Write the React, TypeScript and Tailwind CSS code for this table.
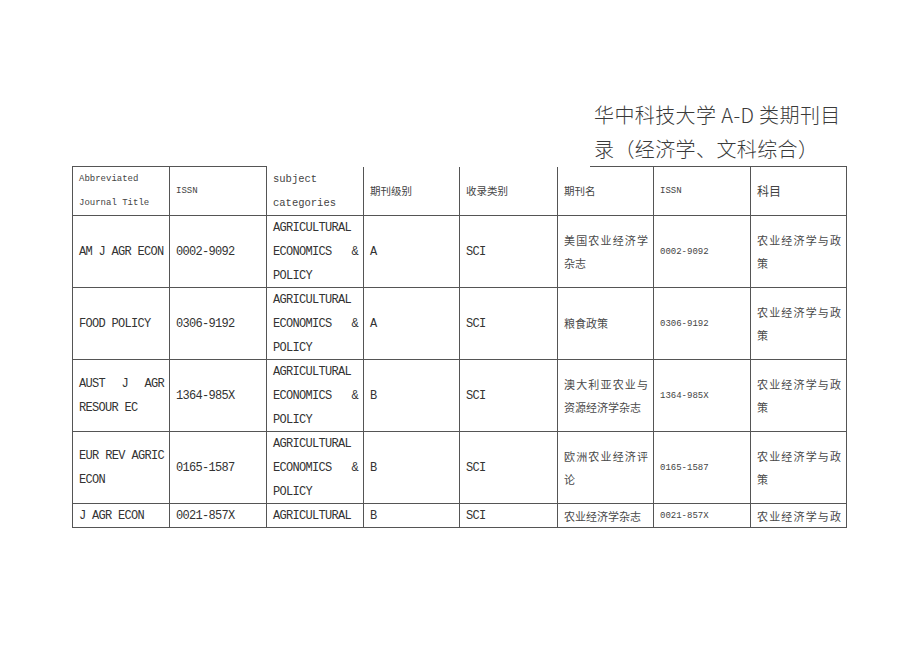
const mono = "font-['Liberation_Mono','Noto_Sans_CJK_SC',monospace]";
const cjk = "font-['Noto_Sans_CJK_SC',sans-serif]";

type Row = {
  abbr: string;
  issn: string;
  level: string;
  index: string;
  name: string;
};

const rows: Row[] = [
  { abbr: "AM J AGR ECON", issn: "0002-9092", level: "A", index: "SCI", name: "美国农业经济学杂志" },
  { abbr: "FOOD POLICY", issn: "0306-9192", level: "A", index: "SCI", name: "粮食政策" },
  { abbr: "AUST J AGR RESOUR EC", issn: "1364-985X", level: "B", index: "SCI", name: "澳大利亚农业与资源经济学杂志" },
  { abbr: "EUR REV AGRIC ECON", issn: "0165-1587", level: "B", index: "SCI", name: "欧洲农业经济评论" },
  { abbr: "J AGR ECON", issn: "0021-857X", level: "B", index: "SCI", name: "农业经济学杂志" },
];

function Cell({ children, last, className = "" }: { children: React.ReactNode; last?: boolean; className?: string }) {
  return (
    <div
      className={`flex overflow-hidden border-r border-b border-[#555] pl-[6px] pr-[5px] ${
        last ? "items-start" : "items-center"
      }`}
    >
      <div className={`w-full text-justify ${className}`}>{children}</div>
    </div>
  );
}

const latin = `${mono} text-[12px] leading-[24px] tracking-[-0.7px] text-[#333]`;
const small = `${mono} text-[9px] leading-[24px] text-[#444]`;
const hanzi = `${cjk} text-[11px] leading-[23px] text-[#4a4a4a]`;
const hanziLast = `${cjk} text-[11px] leading-[24px] text-[#4a4a4a]`;
const head = `${cjk} text-[10.5px] leading-[24px] text-[#444]`;

export default function App() {
  return (
    <div className="min-h-[651px] w-[920px] bg-white pl-[72px] pt-[98px]">
      {/* Title */}
      <div className={`ml-[522px] h-[68px] w-[256px] ${cjk} text-[20px] font-light leading-[34px] tracking-[0.4px] text-[#3a3a3a]`}>
        华中科技大学 A-D 类期刊目录（经济学、文科综合）
      </div>

      {/* Top border, broken under the title */}
      <div className="flex h-px">
        <div className="w-[195px] bg-[#555]" />
        <div className="ml-[323px] w-[257px] bg-[#555]" />
      </div>

      {/* Table */}
      <div className="grid w-[776px] grid-cols-[97px_97px_97px_96px_98px_96px_97px_96px] grid-rows-[49px_72px_72px_72px_72px_24px] border-l border-[#555]">
        <Cell className={small}>Abbreviated Journal Title</Cell>
        <Cell className={small}>ISSN</Cell>
        <Cell className={`${mono} text-[10.5px] leading-[24px] text-[#444]`}>subject categories</Cell>
        <Cell className={head}>期刊级别</Cell>
        <Cell className={head}>收录类别</Cell>
        <Cell className={head}>期刊名</Cell>
        <Cell className={small}>ISSN</Cell>
        <Cell className={`${cjk} text-[12px] leading-[24px] text-[#444]`}>科目</Cell>

        {rows.map((r, i) => {
          const last = i === rows.length - 1;
          return [
            <Cell key={`a${i}`} last={last} className={latin}>{r.abbr}</Cell>,
            <Cell key={`b${i}`} last={last} className={latin}>{r.issn}</Cell>,
            <Cell key={`c${i}`} last={last} className={latin}>AGRICULTURAL ECONOMICS &amp; POLICY</Cell>,
            <Cell key={`d${i}`} last={last} className={latin}>{r.level}</Cell>,
            <Cell key={`e${i}`} last={last} className={latin}>{r.index}</Cell>,
            <Cell key={`f${i}`} last={last} className={last ? hanziLast : hanzi}>{r.name}</Cell>,
            <Cell key={`g${i}`} last={last} className={small}>{r.issn}</Cell>,
            <Cell key={`h${i}`} last={last} className={last ? hanziLast : hanzi}>农业经济学与政策</Cell>,
          ];
        })}
      </div>
    </div>
  );
}
